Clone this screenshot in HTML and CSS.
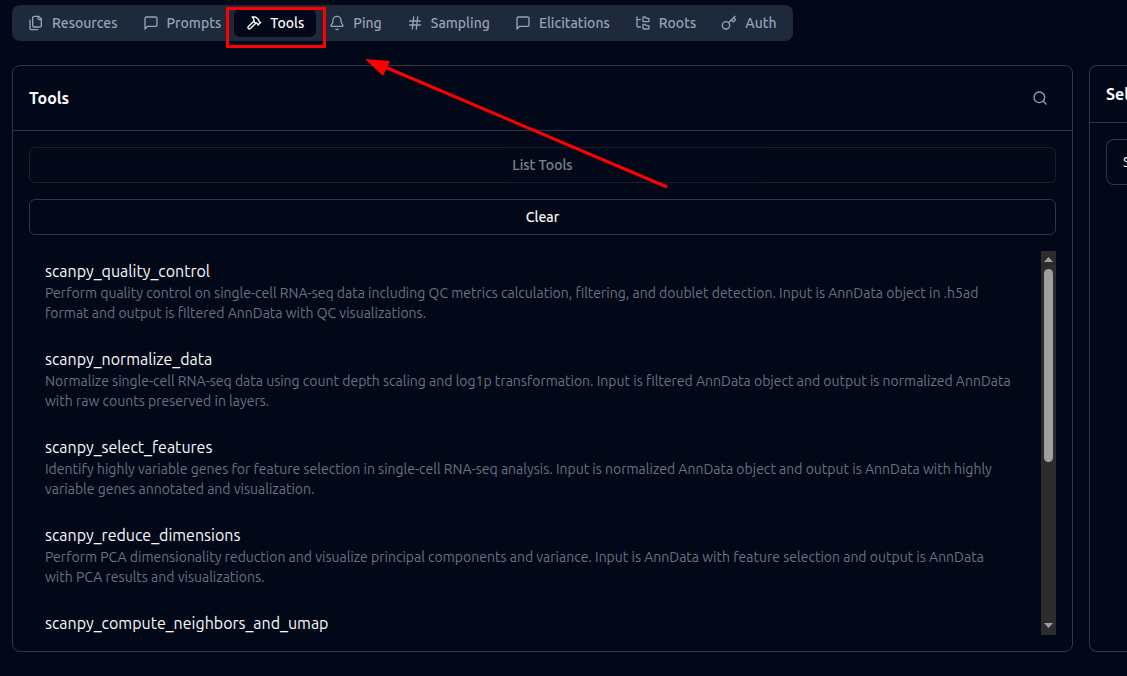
FILE: index.html
```html
<!DOCTYPE html>
<html lang="en">
	<head>
		<meta charset="utf-8">
		<title>Tools</title>
		<link rel="stylesheet" href="styles.css">
	</head>
	<body>
		<div class="page">
			<nav class="tabs">
				<button class="tab" type="button">
					<svg class="icon" viewBox="0 0 24 24"><path d="M20 7h-3a2 2 0 0 1-2-2V2"/><path d="M9 18a2 2 0 0 1-2-2V4a2 2 0 0 1 2-2h7l4 4v10a2 2 0 0 1-2 2Z"/><path d="M3 7.6v12.8A1.6 1.6 0 0 0 4.6 22h9.8"/></svg>
					Resources
				</button>
				<button class="tab" type="button">
					<svg class="icon" viewBox="0 0 24 24"><path d="M21 15a2 2 0 0 1-2 2H7l-4 4V5a2 2 0 0 1 2-2h14a2 2 0 0 1 2 2z"/></svg>
					Prompts
				</button>
				<button class="tab active" type="button">
					<svg class="icon" viewBox="0 0 24 24"><path d="m15 12-8.373 8.373a1 1 0 1 1-3-3L12 9"/><path d="m18 15 4-4"/><path d="m21.5 11.500-1.914-1.914A2 2 0 0 1 19 8.172V7l-2.260-2.260a6 6 0 0 0-4.202-1.756L9 2.960l.920.820A6.180 6.180 0 0 1 12 8.400V10l2 2h1.172a2 2 0 0 1 1.414.586L18.500 14.500"/></svg>
					Tools
					<span class="mark"></span>
				</button>
				<button class="tab" type="button">
					<svg class="icon" viewBox="0 0 24 24"><path d="M10.268 21a2 2 0 0 0 3.464 0"/><path d="M3.262 15.326A1 1 0 0 0 4 17h16a1 1 0 0 0 .740-1.673C19.410 13.956 18 12.499 18 8A6 6 0 0 0 6 8c0 4.499-1.411 5.956-2.738 7.326"/></svg>
					Ping
				</button>
				<button class="tab" type="button">
					<svg class="icon" viewBox="0 0 24 24"><path d="M4 9h16M4 15h16M10 3 8 21M16 3l-2 18"/></svg>
					Sampling
				</button>
				<button class="tab" type="button">
					<svg class="icon" viewBox="0 0 24 24"><path d="M21 15a2 2 0 0 1-2 2H7l-4 4V5a2 2 0 0 1 2-2h14a2 2 0 0 1 2 2z"/></svg>
					Elicitations
				</button>
				<button class="tab" type="button">
					<svg class="icon" viewBox="0 0 24 24"><path d="M20 10a1 1 0 0 0 1-1V6a1 1 0 0 0-1-1h-2.500a1 1 0 0 1-.800-.400l-.900-1.200A1 1 0 0 0 15 3h-2a1 1 0 0 0-1 1v5a1 1 0 0 0 1 1Z"/><path d="M20 21a1 1 0 0 0 1-1v-3a1 1 0 0 0-1-1h-2.900a1 1 0 0 1-.880-.550l-.420-.850a1 1 0 0 0-.920-.600H13a1 1 0 0 0-1 1v5a1 1 0 0 0 1 1Z"/><path d="M3 5a2 2 0 0 0 2 2h3M3 3v13a2 2 0 0 0 2 2h3"/></svg>
					Roots
				</button>
				<button class="tab" type="button">
					<svg class="icon" viewBox="0 0 24 24"><path d="m15.500 7.500 2.300 2.300a1 1 0 0 0 1.400 0l2.100-2.100a1 1 0 0 0 0-1.400L19 4"/><path d="m21 2-9.600 9.600"/><circle cx="7.500" cy="15.500" r="5.500"/></svg>
					Auth
				</button>
			</nav>

			<main class="panels">
				<section class="card">
					<header class="card-head">
						<h3>Tools</h3>
						<button class="search" type="button" aria-label="Search">
							<svg class="icon" viewBox="0 0 24 24"><circle cx="11" cy="11" r="8"/><path d="m21 21-4.300-4.300"/></svg>
						</button>
					</header>
					<div class="card-body">
						<button class="btn" type="button" disabled>List Tools</button>
						<button class="btn" type="button">Clear</button>
						<div class="list">
							<ul class="items">
								<li>
									<h4>scanpy_quality_control</h4>
									<p>Perform quality control on single-cell RNA-seq data including QC metrics calculation, filtering, and doublet detection. Input is AnnData object in .h5ad format and output is filtered AnnData with QC visualizations.</p>
								</li>
								<li>
									<h4>scanpy_normalize_data</h4>
									<p>Normalize single-cell RNA-seq data using count depth scaling and log1p transformation. Input is filtered AnnData object and output is normalized AnnData with raw counts preserved in layers.</p>
								</li>
								<li>
									<h4>scanpy_select_features</h4>
									<p>Identify highly variable genes for feature selection in single-cell RNA-seq analysis. Input is normalized AnnData object and output is AnnData with highly variable genes annotated and visualization.</p>
								</li>
								<li>
									<h4>scanpy_reduce_dimensions</h4>
									<p>Perform PCA dimensionality reduction and visualize principal components and variance. Input is AnnData with feature selection and output is AnnData with PCA results and visualizations.</p>
								</li>
								<li>
									<h4>scanpy_compute_neighbors_and_umap</h4>
								</li>
							</ul>
							<div class="scrollbar">
								<svg class="arrow" viewBox="0 0 9 5"><path d="M0 5 4.500 0 9 5z"/></svg>
								<div class="thumb"></div>
								<svg class="arrow" viewBox="0 0 9 5"><path d="M0 0h9L4.500 5z"/></svg>
							</div>
						</div>
					</div>
				</section>

				<section class="card side">
					<header class="card-head">
						<h3>Select a tool</h3>
					</header>
					<div class="card-body">
						<div class="alert">Select a tool</div>
					</div>
				</section>
			</main>

			<svg class="pointer" viewBox="0 0 303 130"><path class="line" d="M20 8 302 128"/><path class="tip" d="M0 0 25 2 18 17z"/></svg>
		</div>
	</body>
</html>
```
FILE: styles.css
```css
*{
	box-sizing: border-box;
	margin: 0;
	padding: 0;
}
body{
	background: #020817;
	color: #f8fafc;
	font: 14px/20px Ubuntu, Roboto, sans-serif;
	overflow: hidden;
}
button{
	font: inherit;
	font-weight: 500;
	color: inherit;
	background: none;
	border: none;
}
h3{
	font-size: 16px;
	line-height: 24px;
	font-weight: 700;
}
.icon{
	width: 16px;
	height: 16px;
	fill: none;
	stroke: currentColor;
	stroke-width: 2;
	stroke-linecap: round;
	stroke-linejoin: round;
	flex: none;
}
.page{
	position: relative;
	display: flex;
	flex-direction: column;
	align-items: flex-start;
	gap: 24px;
	height: 100vh;
	padding: 5px 0 24px 12px;
}
.tabs{
	display: flex;
	gap: 1px;
	padding: 4px;
	border-radius: 8px;
	background: #1e293b;
	color: #94a3b8;
}
.tab{
	position: relative;
	display: flex;
	align-items: center;
	gap: 8px;
	padding: 4px 12px;
	border-radius: 6px;
}
.tab.active{
	background: #020817;
	color: #f8fafc;
}
/* red frame round the active tab */
.mark{
	position: absolute;
	z-index: 1;
	top: -2px;
	right: -10px;
	bottom: -11px;
	left: -8px;
	border: 3px solid #f00;
}
.panels{
	display: flex;
	flex: 1;
	gap: 16px;
	width: 100%;
	min-height: 0;
}
.card{
	flex: 1;
	display: flex;
	flex-direction: column;
	min-width: 0;
	border: 1px solid #2f3746;
	border-radius: 8px;
}
.card-head{
	display: flex;
	align-items: center;
	justify-content: space-between;
	padding: 16px;
	border-bottom: 1px solid #2a3646;
	white-space: nowrap;
}
.search{
	display: flex;
	align-items: center;
	justify-content: center;
	width: 32px;
	height: 32px;
	color: #94a3b8;
}
.card-body{
	flex: 1;
	display: flex;
	flex-direction: column;
	gap: 16px;
	min-height: 0;
	padding: 16px;
}
.btn{
	height: 36px;
	flex: none;
	border: 1px solid #2f3746;
	border-radius: 6px;
}
.btn:disabled{
	opacity: .5;
}
.list{
	flex: 1;
	display: flex;
	min-height: 0;
	overflow: hidden;
}
.items{
	flex: 1;
	display: flex;
	flex-direction: column;
	gap: 24px;
	padding: 8px 28px 8px 16px;
	list-style: none;
}
.items h4{
	font-size: 16px;
	line-height: 24px;
	font-weight: 400;
}
.items p{
	color: #6b7280;
}
.scrollbar{
	display: flex;
	flex-direction: column;
	align-items: center;
	gap: 7px;
	width: 15px;
	padding: 6px 0 7px;
	background: #2c2c2c;
}
.arrow{
	width: 9px;
	height: 5px;
	fill: #9f9f9f;
}
.arrow:last-child{
	margin-top: auto;
}
.thumb{
	width: 9px;
	height: 52%;
	border-radius: 5px;
	background: #9f9f9f;
}
.side{
	flex: none;
	width: 38px;
	overflow: hidden;
	border-right: none;
	border-radius: 8px 0 0 8px;
}
.side .card-body{
	padding-right: 0;
}
.alert{
	padding: 12px 16px;
	border: 1px solid #2f3746;
	border-right: none;
	border-radius: 8px 0 0 8px;
	white-space: nowrap;
}
.pointer{
	position: absolute;
	top: 59px;
	left: 365px;
	width: 303px;
	height: 130px;
	pointer-events: none;
}
.pointer .line{
	stroke: #f00;
	stroke-width: 3;
}
.pointer .tip{
	fill: #f00;
}
```
